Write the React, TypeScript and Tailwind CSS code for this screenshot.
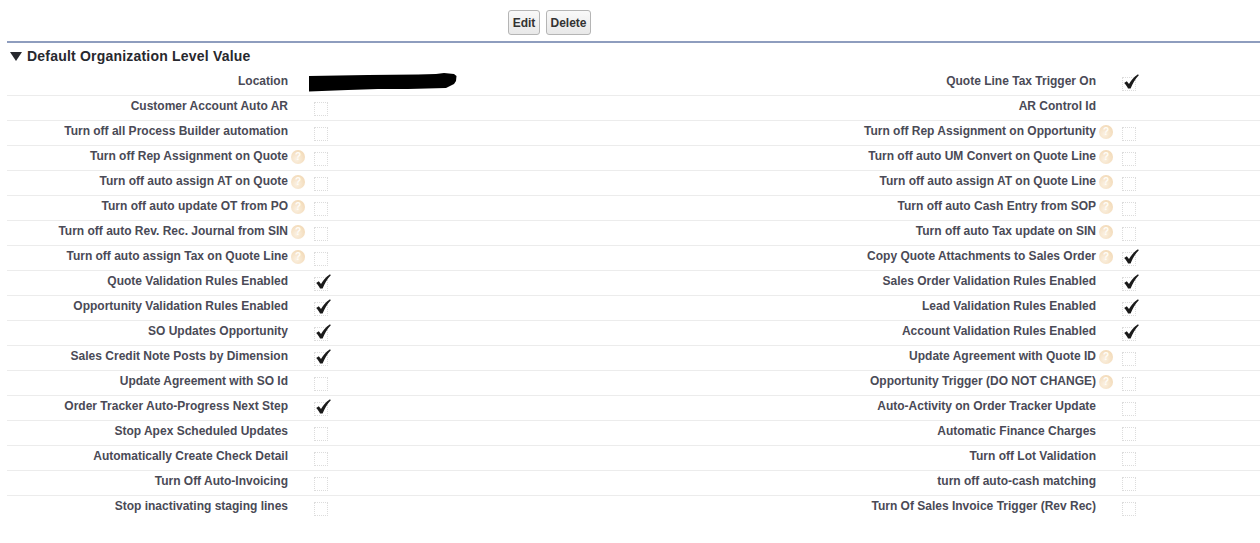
const rows: [string, boolean, boolean, string, boolean, boolean, boolean?][] = [
  ["Location", false, false, "Quote Line Tax Trigger On", false, true],
  ["Customer Account Auto AR", false, false, "AR Control Id", false, false, true],
  ["Turn off all Process Builder automation", false, false, "Turn off Rep Assignment on Opportunity", true, false],
  ["Turn off Rep Assignment on Quote", true, false, "Turn off auto UM Convert on Quote Line", true, false],
  ["Turn off auto assign AT on Quote", true, false, "Turn off auto assign AT on Quote Line", true, false],
  ["Turn off auto update OT from PO", true, false, "Turn off auto Cash Entry from SOP", true, false],
  ["Turn off auto Rev. Rec. Journal from SIN", true, false, "Turn off auto Tax update on SIN", true, false],
  ["Turn off auto assign Tax on Quote Line", true, false, "Copy Quote Attachments to Sales Order", true, true],
  ["Quote Validation Rules Enabled", false, true, "Sales Order Validation Rules Enabled", false, true],
  ["Opportunity Validation Rules Enabled", false, true, "Lead Validation Rules Enabled", false, true],
  ["SO Updates Opportunity", false, true, "Account Validation Rules Enabled", false, true],
  ["Sales Credit Note Posts by Dimension", false, true, "Update Agreement with Quote ID", true, false],
  ["Update Agreement with SO Id", false, false, "Opportunity Trigger (DO NOT CHANGE)", true, false],
  ["Order Tracker Auto-Progress Next Step", false, true, "Auto-Activity on Order Tracker Update", false, false],
  ["Stop Apex Scheduled Updates", false, false, "Automatic Finance Charges", false, false],
  ["Automatically Create Check Detail", false, false, "Turn off Lot Validation", false, false],
  ["Turn Off Auto-Invoicing", false, false, "turn off auto-cash matching", false, false],
  ["Stop inactivating staging lines", false, false, "Turn Of Sales Invoice Trigger (Rev Rec)", false, false],
];

function Help() {
  return (
    <span className="absolute left-[3px] top-[4px] flex h-[14px] w-[14px] items-center justify-center rounded-full bg-[radial-gradient(circle_at_40%_65%,#fbf1e2,#f0d3ab)] text-[10px] leading-none font-bold text-[#fffdf8]">
      ?
    </span>
  );
}

function Check({ on }: { on: boolean }) {
  return (
    <span className="relative block h-[14px] w-[14px] border border-dotted border-[#dcdcdc]">
      {on && (
        <svg className="absolute left-0 top-[-5px]" width="17" height="17" viewBox="0 0 17 17">
          <path d="M1.2 10 L3.8 8.2 L6 11 C8 7.8 10.5 4.2 15 1.2 L15.8 2.2 C12 6 9.6 10.5 7.6 15.6 L5 15.6 C4.2 13.5 2.8 11.8 1.2 10 Z" fill="#1a1a1a" />
        </svg>
      )}
    </span>
  );
}

function Label({ text, help, width }: { text: string; help: boolean; width: string }) {
  return (
    <div className={`relative flex h-full shrink-0 justify-end pt-[1px] ${width}`}>
      <span className="whitespace-nowrap">{text}</span>
      {help && (
        <span className="absolute left-full top-0 w-0">
          <Help />
        </span>
      )}
    </div>
  );
}

export default function App() {
  return (
    <div className="h-[543px] w-[1260px] overflow-hidden bg-white pl-[7px] font-['Liberation_Sans',Arial,sans-serif] text-[12px] font-bold text-[#4a4a56]">
      <div className="flex h-[41px] gap-[6px] pl-[501px] pt-[10px]">
        <button className="h-[25px] w-[32px] rounded-[3px] border border-[#b5b5b5] bg-gradient-to-b from-[#f9f9f9] to-[#e8e8e8] text-[12px] font-bold text-[#333]">
          Edit
        </button>
        <button className="h-[25px] w-[45px] rounded-[3px] border border-[#b5b5b5] bg-gradient-to-b from-[#f9f9f9] to-[#e8e8e8] text-[12px] font-bold text-[#333]">
          Delete
        </button>
      </div>
      <div className="h-[2px] bg-[#8e9dbe]" />
      <div className="flex h-[28px] items-center gap-[5px] pb-[2px] pl-[3px] text-[14px] leading-none text-[#27282e]">
        <svg width="12" height="9" viewBox="0 0 12 9">
          <path d="M0 0 H12 L6 9 Z" fill="#27282e" />
        </svg>
        <span className="tracking-[0.2px]">Default Organization Level Value</span>
      </div>
      <div>
        {rows.map((r, i) => (
          <div key={i} className={`flex h-[25px] leading-[18px] ${i < rows.length - 1 ? "border-b border-[#ececec]" : ""}`}>
            <Label text={r[0]} help={r[1]} width="w-[281px]" />
            <div className="flex h-full w-[527px] shrink-0 pl-[26px] pt-[6px]">
              {i === 0 ? (
                <svg className="ml-[-6px] mt-[-4px]" width="149" height="19" viewBox="0 0 149 19">
                  <path d="M1 3 L60 2 L110 1.5 L128 1 L136 0 L146 1 L148.5 3 L148 8 L146 11 L138 15 L100 16 L70 16 L40 17 L1 18.5 Z" fill="#000" />
                </svg>
              ) : (
                <Check on={r[2]} />
              )}
            </div>
            <Label text={r[3]} help={r[4]} width="w-[281px]" />
            <div className="flex h-full pl-[26px] pt-[6px]">{!r[6] && <Check on={r[5]} />}</div>
          </div>
        ))}
      </div>
    </div>
  );
}
